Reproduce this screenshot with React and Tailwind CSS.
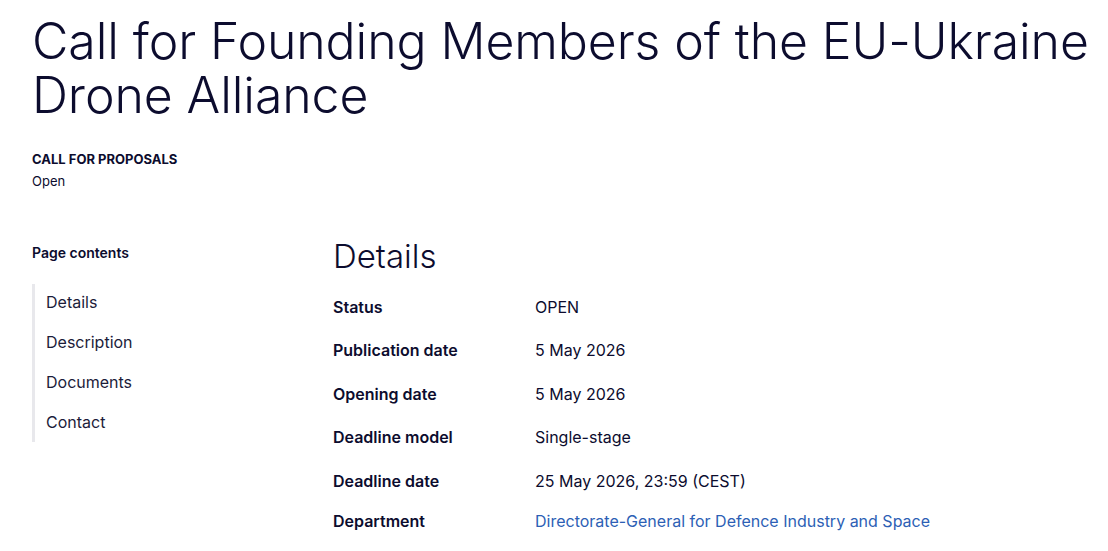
export default function App() {
  const rows = [
    ["Status", "OPEN"],
    ["Publication date", "5 May 2026"],
    ["Opening date", "5 May 2026"],
    ["Deadline model", "Single-stage"],
    ["Deadline date", "25 May 2026, 23:59 (CEST)"],
    ["Department", "Directorate-General for Defence Industry and Space", true],
  ];
  const nav = ["Details", "Description", "Documents", "Contact"];
  return (
    <div className="min-h-[551px] bg-white text-[#0c0c2e] pl-[32px] pt-[14px]" style={{ fontFamily: "Inter, 'Noto Sans', sans-serif" }}>
      <h1 className="text-[50px] leading-[54px] font-light tracking-[-0.1px] whitespace-nowrap">
        Call for Founding Members of the EU-Ukraine
        <br />
        Drone Alliance
      </h1>
      <div className="mt-[29px] text-[13px] font-bold leading-[16px] uppercase">Call for proposals</div>
      <div className="mt-[6px] text-[13px] leading-[16px]">Open</div>
      <div className="flex mt-[42px]">
        <aside className="w-[301px] shrink-0">
          <div className="text-[14px] font-semibold leading-[20px] mt-[12px]">Page contents</div>
          <ul className="mt-[21px] border-l-[3px] border-[#e8e8ec] pl-[11px] pt-[6px] flex flex-col gap-[16px] pb-[8px]">
            {nav.map((n) => (
              <li key={n} className="text-[16px] leading-[24px] text-[#1c1c3a]">{n}</li>
            ))}
          </ul>
        </aside>
        <main className="flex-1">
          <h2 className="text-[33px] font-light leading-[40px] mt-[5px]">Details</h2>
          <dl className="mt-[19px] flex flex-col gap-[19.4px]">
            {rows.map(([k, v, link], i) => (
              <div key={k} className={"flex text-[16px] leading-[24px]" + (i === 5 ? " -mt-[3px]" : "")}>
                <dt className="w-[202px] font-semibold">{k}</dt>
                <dd className={link ? "text-[#2d5fb5]" : ""}>{v}</dd>
              </div>
            ))}
          </dl>
        </main>
      </div>
    </div>
  );
}
